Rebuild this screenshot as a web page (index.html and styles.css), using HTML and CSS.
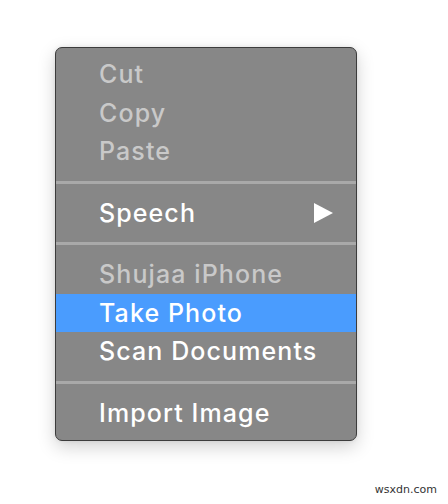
FILE: index.html
```html
<!DOCTYPE html>
<html lang="en">
<head>
  <meta charset="UTF-8" />
  <title>Context Menu</title>
  <link rel="stylesheet" href="styles.css">
</head>
<body>
  <div class="menu">
    <div class="item disabled">Cut</div>
    <div class="item disabled">Copy</div>
    <div class="item disabled">Paste</div>
    <div class="sep"></div>
    <div class="item submenu">Speech <span class="arrow"></span></div>
    <div class="sep"></div>
    <div class="item disabled">Shujaa iPhone</div>
    <div class="item active">Take Photo</div>
    <div class="item">Scan Documents</div>
    <div class="sep"></div>
    <div class="item">Import Image</div>
  </div>
  <div class="watermark">wsxdn.com</div>
</body>
</html>
```
FILE: styles.css
```css
body {
  margin: 0;
  width: 448px;
  height: 504px;
  background: white;
  font-family: Inter, "Liberation Sans", sans-serif;
  position: relative;
  overflow: hidden;
}
.menu {
  margin: 47px 0 0 55px;
  width: 300px;
  padding: 7px 0 8px;
  background: #878787;
  border: 1px solid #3c3c3c;
  border-radius: 7px;
  box-shadow: 0 6px 18px rgba(0, 0, 0, 0.18), 0 0 4px rgba(0, 0, 0, 0.08);
}
.item {
  height: 38.5px;
  line-height: 38.5px;
  padding-left: 43px;
  font-size: 25px;
  font-weight: 500;
  color: white;
  letter-spacing: 1.1px;
}
.item.disabled {
  color: #c9c9c9;
}
.item.active {
  background: #4a9cfe;
}
.submenu {
  display: flex;
  align-items: center;
  justify-content: space-between;
  padding-right: 23px;
}
.arrow {
  width: 0;
  height: 0;
  border-top: 10.5px solid transparent;
  border-bottom: 10.5px solid transparent;
  border-left: 19px solid white;
}
.sep {
  height: 3px;
  margin: 10px 0;
  background: #a9a9a9;
}
.watermark {
  position: absolute;
  right: 11px;
  bottom: 8px;
  font-family: "DejaVu Sans", sans-serif;
  font-size: 11px;
  color: #333;
}
```
